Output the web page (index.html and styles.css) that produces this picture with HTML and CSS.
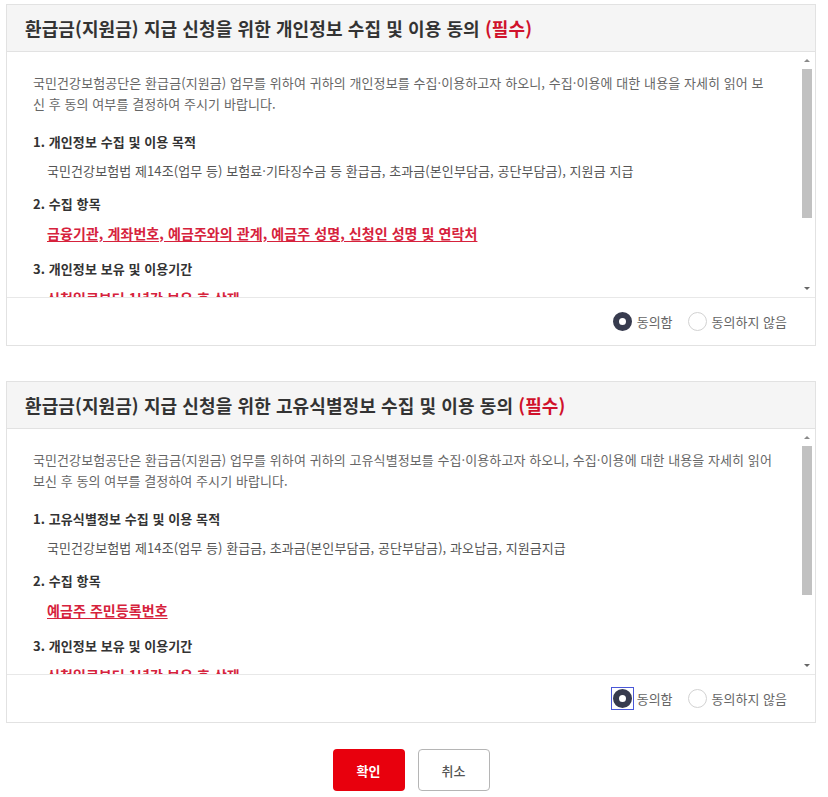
FILE: index.html
```html
<!DOCTYPE html>
<html lang="ko">
<head>
    <meta charset="UTF-8">
    <meta name="viewport" content="width=device-width, initial-scale=1.0">
    <title>개인정보 수집 및 이용 동의</title>
    <link rel="stylesheet" href="styles.css">
</head>
<body>
<div class="wrap">
    <div class="agree-box">
        <div class="agree-head">
            <h2>환급금(지원금) 지급 신청을 위한 개인정보 수집 및 이용 동의 <span class="req">(필수)</span></h2>
        </div>
        <div class="agree-body">
            <div class="agree-text">
                <p class="intro">국민건강보험공단은 환급금(지원금) 업무를 위하여 귀하의 개인정보를 수집·이용하고자 하오니, 수집·이용에 대한 내용을 자세히 읽어 보신 후 동의 여부를 결정하여 주시기 바랍니다.</p>
                <h3>1. 개인정보 수집 및 이용 목적</h3>
                <p class="detail">국민건강보험법 제14조(업무 등) 보험료·기타징수금 등 환급금, 초과금(본인부담금, 공단부담금), 지원금 지급</p>
                <h3>2. 수집 항목</h3>
                <p class="detail em">금융기관, 계좌번호, 예금주와의 관계, 예금주 성명, 신청인 성명 및 연락처</p>
                <h3>3. 개인정보 보유 및 이용기간</h3>
                <p class="detail em">신청일로부터 1년간 보유 후 삭제</p>
            </div>
            <div class="scrollbar">
                <span class="sb-up"></span>
                <span class="sb-thumb"></span>
                <span class="sb-down"></span>
            </div>
        </div>
        <div class="agree-foot">
            <label class="opt"><span class="ring"><input type="radio" name="agree1" checked></span>동의함</label>
            <label class="opt"><span class="ring"><input type="radio" name="agree1"></span>동의하지 않음</label>
        </div>
    </div>

    <div class="agree-box">
        <div class="agree-head">
            <h2>환급금(지원금) 지급 신청을 위한 고유식별정보 수집 및 이용 동의 <span class="req">(필수)</span></h2>
        </div>
        <div class="agree-body">
            <div class="agree-text">
                <p class="intro">국민건강보험공단은 환급금(지원금) 업무를 위하여 귀하의 고유식별정보를 수집·이용하고자 하오니, 수집·이용에 대한 내용을 자세히 읽어 보신 후 동의 여부를 결정하여 주시기 바랍니다.</p>
                <h3>1. 고유식별정보 수집 및 이용 목적</h3>
                <p class="detail">국민건강보험법 제14조(업무 등) 환급금, 초과금(본인부담금, 공단부담금), 과오납금, 지원금지급</p>
                <h3>2. 수집 항목</h3>
                <p class="detail em">예금주 주민등록번호</p>
                <h3>3. 개인정보 보유 및 이용기간</h3>
                <p class="detail em">신청일로부터 1년간 보유 후 삭제</p>
            </div>
            <div class="scrollbar">
                <span class="sb-up"></span>
                <span class="sb-thumb"></span>
                <span class="sb-down"></span>
            </div>
        </div>
        <div class="agree-foot">
            <label class="opt"><span class="ring focus"><input type="radio" name="agree2" checked></span>동의함</label>
            <label class="opt"><span class="ring"><input type="radio" name="agree2"></span>동의하지 않음</label>
        </div>
    </div>

    <div class="btns">
        <button class="btn btn-ok">확인</button>
        <button class="btn btn-cancel">취소</button>
    </div>
</div>
</body>
</html>
```

FILE: styles.css
```css
body {
    margin: 0;
    padding: 0;
    background: #fff;
    font-family: "Noto Sans CJK KR", "Noto Sans", sans-serif;
    color: #333;
}
.wrap {
    width: 810px;
    margin: 4px 0 0 6px;
}
.agree-box {
    border: 1px solid #e2e2e2;
    margin-bottom: 35px;
}
.agree-head {
    background: #f5f5f5;
    border-bottom: 1px solid #e2e2e2;
    height: 46px;
    display: flex;
    align-items: center;
    padding-left: 18px;
}
.agree-head h2 {
    margin: 0;
    font-size: 18px;
    font-weight: 700;
    letter-spacing: 0.1px;
    color: #333;
}
.req {
    color: #d0112b;
}
.agree-body {
    display: flex;
    height: 245px;
    border-bottom: 1px solid #e8e8e8;
}
.agree-text {
    flex: 1;
    overflow: hidden;
    padding: 20px 27px 0 26px;
    font-size: 13px;
    line-height: 21px;
    letter-spacing: 0.08px;
    color: #555;
}
.agree-text p {
    margin: 0;
}
.agree-text .intro {
    color: #666;
}
.agree-text h3 {
    margin: 17px 0 0;
    font-size: 13px;
    font-weight: 700;
    color: #333;
}
.agree-text .detail {
    margin-top: 8px;
    padding-left: 14px;
}
.agree-text .detail + h3 {
    margin-top: 12px;
}
.agree-text .em {
    margin-top: 9px;
    font-size: 14px;
    font-weight: 700;
    color: #d6223c;
    text-decoration: underline;
    text-underline-offset: 2px;
}
.agree-text .em + h3 {
    margin-top: 14px;
}
.scrollbar {
    width: 15px;
    margin-right: 1px;
    display: flex;
    flex-direction: column;
    align-items: center;
}
.sb-up,
.sb-down {
    width: 0;
    height: 0;
    border-left: 3px solid transparent;
    border-right: 3px solid transparent;
}
.sb-up {
    margin-top: 7px;
    border-bottom: 3px solid #8a8a8a;
}
.sb-down {
    margin-top: auto;
    margin-bottom: 7px;
    border-top: 3px solid #666;
}
.sb-thumb {
    width: 10px;
    height: 149px;
    margin-top: 7px;
    background: #c1c1c1;
}
.agree-foot {
    height: 47px;
    display: flex;
    justify-content: flex-end;
    align-items: center;
    gap: 15px;
    padding-right: 28px;
}
.opt {
    display: flex;
    align-items: center;
    gap: 5px;
    font-size: 13px;
    color: #666;
}
.ring {
    display: flex;
    width: 19px;
    height: 19px;
}
.ring.focus {
    outline: 1px solid #4a58d8;
    outline-offset: 1px;
}
.opt input {
    appearance: none;
    -webkit-appearance: none;
    margin: 0;
    width: 19px;
    height: 19px;
    border-radius: 50%;
    border: 1px solid #d2d2d2;
    background: #fff;
    box-sizing: border-box;
}
.opt input:checked {
    border: 6px solid #373b4e;
}
.btns {
    display: flex;
    justify-content: center;
    gap: 13px;
    margin-top: -9px;
}
.btn {
    width: 72px;
    height: 42px;
    border-radius: 4px;
    font-family: "Noto Sans CJK KR", sans-serif;
    font-size: 13px;
    font-weight: 700;
    cursor: pointer;
}
.btn-ok {
    background: #e8000d;
    border: none;
    color: #fff;
}
.btn-cancel {
    background: #fff;
    border: 1px solid #b5b5b5;
    color: #555;
    font-weight: 500;
}
```
